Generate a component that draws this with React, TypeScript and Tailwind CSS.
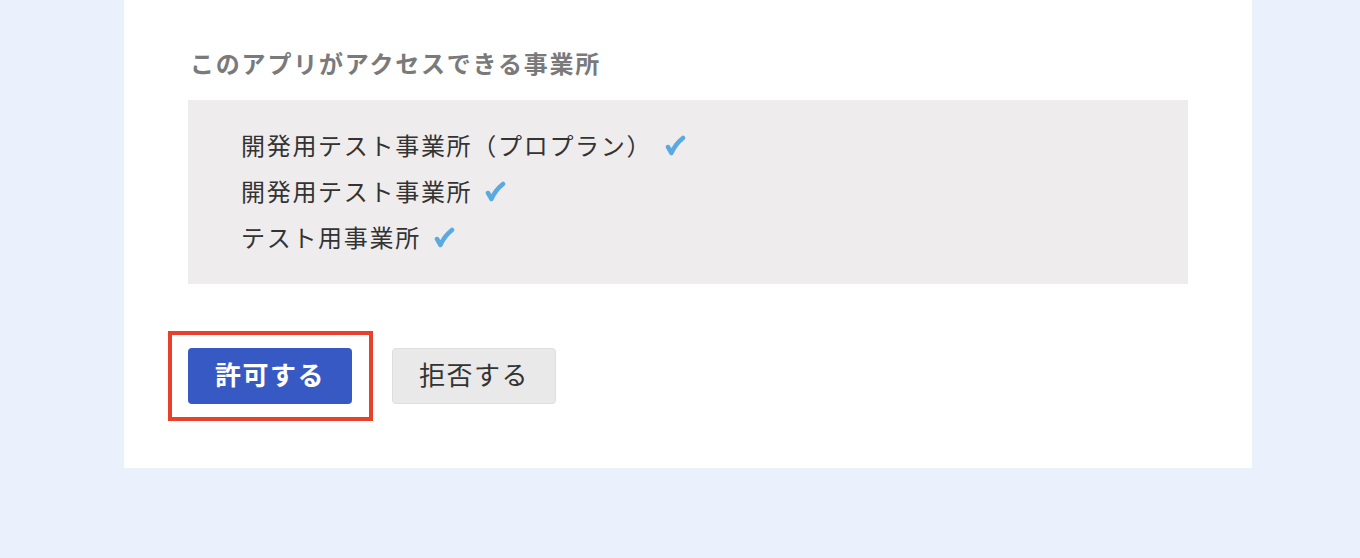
const offices = ["開発用テスト事業所（プロプラン）", "開発用テスト事業所", "テスト用事業所"];

const Check = () => (
  <svg className="ml-[12px] mt-[2px]" width="22" height="22" viewBox="0 0 22 22" fill="none">
    <path d="M4 12 L7.5 18 C10 12 14 7 19 3" stroke="#5aa9e0" strokeWidth="4.5" strokeLinecap="round" strokeLinejoin="round" />
  </svg>
);

export default function App() {
  return (
    <div
      className="min-h-[558px] w-full bg-[#ebf1fc]"
      style={{ fontFamily: '"Noto Sans CJK JP", "Noto Sans", sans-serif' }}
    >
      <div className="ml-[124px] w-[1128px] bg-white px-16 pt-[45px] pb-16">
        <h2 className="mb-[19px] ml-[2px] text-[24px] font-bold leading-9 tracking-[1.8px] text-[#7a7a7a]">
          このアプリがアクセスできる事業所
        </h2>
        <div className="w-[1000px] bg-[#eeeced] pl-[53px] pt-[22px] pb-[24px]">
          {offices.map((name) => (
            <div key={name} className="flex h-[46px] items-center text-[24px] tracking-[1.7px] text-[#333]">
              <span>{name}</span>
              <Check />
            </div>
          ))}
        </div>
        <div className="mt-16 flex items-center gap-10">
          <div className="relative">
            <button className="h-14 w-[164px] rounded-[4px] bg-[#3659c4] pb-[4px] text-[26px] font-bold leading-none tracking-[1.5px] text-white">
              許可する
            </button>
            <div className="pointer-events-none absolute -top-[17px] -bottom-[17px] -left-5 -right-[21px] border-4 border-[#e8402a]" />
          </div>
          <button className="h-14 w-[164px] rounded-[4px] border border-[#dedede] bg-[#e9e9e9] pb-[4px] text-[26px] leading-none tracking-[1.5px] text-[#333]">
            拒否する
          </button>
        </div>
      </div>
    </div>
  );
}
